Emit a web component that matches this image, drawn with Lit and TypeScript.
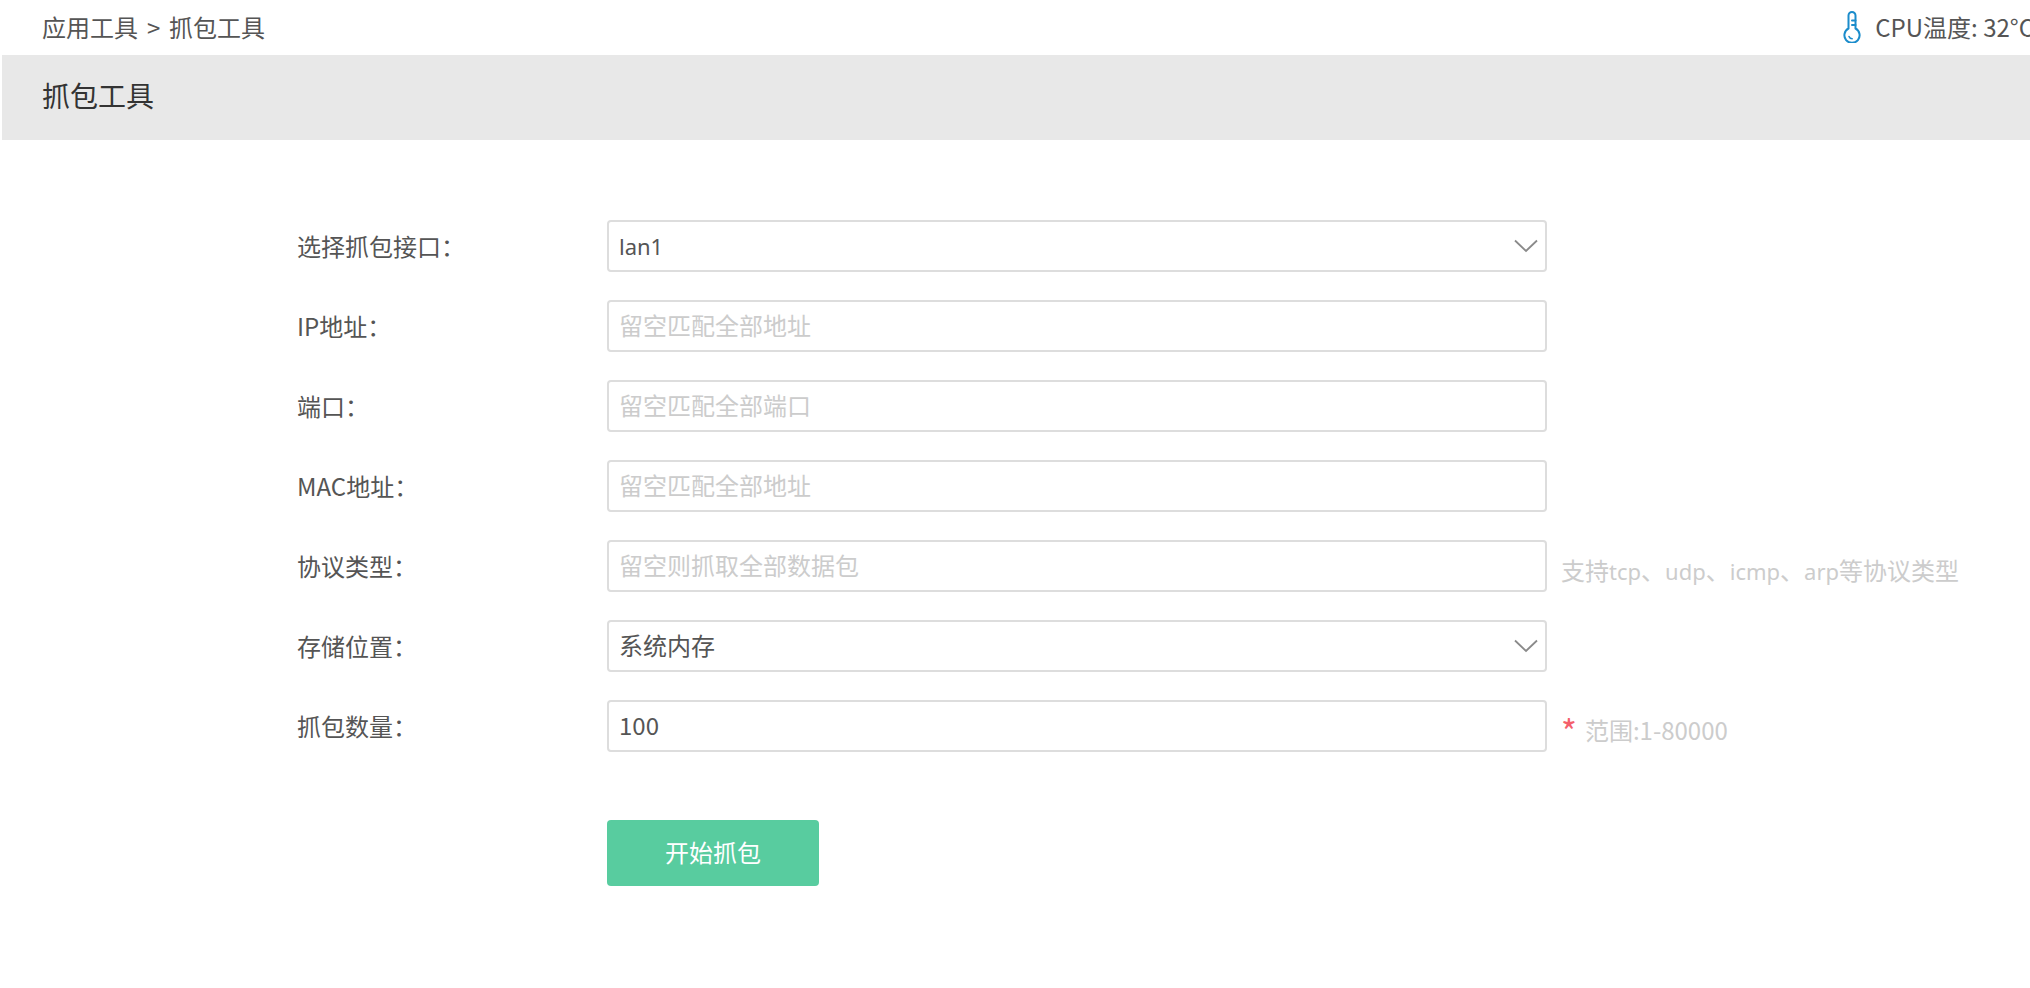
import { LitElement, html, css, svg } from "lit";
import { customElement } from "lit/decorators.js";

type Row = {
  label: string;
  kind: "select" | "input";
  value?: string;
  placeholder?: string;
  hint?: string;
  required?: boolean;
};

const rows: Row[] = [
  { label: "选择抓包接口：", kind: "select", value: "lan1" },
  { label: "IP地址：", kind: "input", placeholder: "留空匹配全部地址" },
  { label: "端口：", kind: "input", placeholder: "留空匹配全部端口" },
  { label: "MAC地址：", kind: "input", placeholder: "留空匹配全部地址" },
  { label: "协议类型：", kind: "input", placeholder: "留空则抓取全部数据包", hint: "支持tcp、udp、icmp、arp等协议类型" },
  { label: "存储位置：", kind: "select", value: "系统内存" },
  { label: "抓包数量：", kind: "input", value: "100", required: true, hint: "范围:1-80000" },
];

const thermometer = svg`<svg class="thermo" viewBox="0 0 18 32" width="18" height="32" fill="none" stroke="#1b8ccb" stroke-width="2" stroke-linecap="round">
  <path d="M5.5 17.5V4.5a3.5 3.5 0 0 1 7 0v13a7.6 7.6 0 1 1-7 0Z"/>
  <path d="M9 9.5h3.5M9 14h3.5"/>
  <path d="M6 25.5a3.4 3.4 0 0 0 3.2 2.2" stroke-width="1.6"/>
</svg>`;

const chevron = svg`<svg class="chev" viewBox="0 0 24 14" width="24" height="14" fill="none" stroke="#8a8a8a" stroke-width="1.8">
  <path d="M1 1.5 12 12 23 1.5"/>
</svg>`;

/** Lowercase Latin runs are set narrower than the CJK text around them. */
const withLatin = (text: string) =>
  text.split(/([a-z]+\d*)/).map((part, i) => (i % 2 ? html`<span class="lat">${part}</span>` : part));

@customElement("app-root")
export class AppRoot extends LitElement {
  static styles = css`
    :host {
      display: block;
      width: 2030px;
      height: 988px;
      overflow: hidden;
      background: #fff;
      color: #555;
      font-family: "Noto Sans CJK SC", sans-serif;
      font-size: 24px;
    }
    .top {
      height: 55px;
      display: flex;
      align-items: center;
      justify-content: space-between;
      padding-left: 42px;
      white-space: nowrap;
      padding-bottom: 2px;
      box-sizing: border-box;
    }
    .crumb {
      word-spacing: 3.5px;
    }
    .temp {
      display: flex;
      align-items: center;
      gap: 14px;
      margin-right: -4px;
    }
    .band {
      height: 85px;
      box-sizing: border-box;
      padding: 0 0 6px 40px;
      margin-left: 2px;
      background: #e8e8e8;
      display: flex;
      align-items: center;
      font-size: 28px;
      color: #333;
    }
    .form {
      display: flex;
      flex-direction: column;
      gap: 28px;
      padding: 80px 0 0 297px;
    }
    .row {
      display: grid;
      grid-template-columns: 310px 940px auto;
      align-items: center;
      height: 52px;
    }
    .label {
      margin-bottom: 2px;
    }
    .field {
      height: 52px;
      box-sizing: border-box;
      border: 2px solid #ddd;
      border-radius: 4px;
      background: #fff;
      display: flex;
      align-items: center;
      justify-content: space-between;
      padding: 0 10px 3px;
      color: #555;
      font: inherit;
      outline: none;
      width: 100%;
    }
    .chev {
      margin: 3px -3px 0 0;
    }
    input.field::placeholder {
      color: #ccc;
      opacity: 1;
    }
    .lat {
      font-family: "Noto Sans", sans-serif;
      font-size: 22px;
    }
    .hint {
      color: #ccc;
      padding-left: 14px;
      white-space: nowrap;
      display: flex;
      align-items: baseline;
      margin-top: 6px;
    }
    .star {
      color: #f4606c;
      font-size: 34px;
      line-height: 24px;
      margin-right: 8px;
      transform: translateY(5px);
    }
    .actions {
      padding: 68px 0 0 607px;
    }
    button {
      width: 212px;
      height: 66px;
      border: none;
      border-radius: 4px;
      background: #58cc9f;
      color: #fff;
      font: inherit;
      padding: 0 0 3px;
    }
  `;

  private field(r: Row) {
    if (r.kind === "select") {
      return html`<div class="field"><span>${withLatin(r.value ?? "")}</span>${chevron}</div>`;
    }
    return html`<input class="field" .value=${r.value ?? ""} placeholder=${r.placeholder ?? ""} />`;
  }

  render() {
    return html`
      <div class="top">
        <span class="crumb">应用工具 &gt; 抓包工具</span>
        <span class="temp">${thermometer}<span>CPU温度: 32°C</span></span>
      </div>
      <div class="band">抓包工具</div>
      <div class="form">
        ${rows.map(
          (r) => html`<div class="row">
            <span class="label">${r.label}</span>
            ${this.field(r)}
            ${r.hint
              ? html`<span class="hint">${r.required ? html`<span class="star">*</span>` : ""}<span>${withLatin(r.hint)}</span></span>`
              : ""}
          </div>`
        )}
      </div>
      <div class="actions"><button>开始抓包</button></div>
    `;
  }
}
